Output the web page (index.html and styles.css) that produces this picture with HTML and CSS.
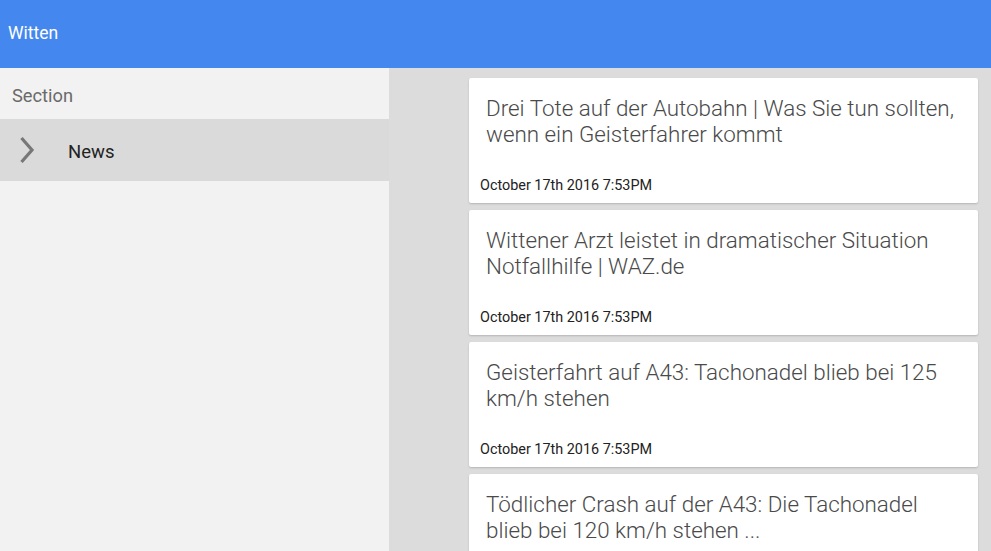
FILE: index.html
```html
<!DOCTYPE html>
<html>
<head>
<meta charset="utf-8">
<link rel="stylesheet" href="styles.css">
</head>
<body>
<header class="topbar"><span class="title">Witten</span></header>
<div class="main">
  <aside class="sidebar">
    <div class="section-label">Section</div>
    <div class="nav-item">
      <svg class="chev" width="16" height="28" viewBox="0 0 16 28"><path d="M2.5 2 L13 14 L2.5 26" fill="none" stroke="#777" stroke-width="3.2"/></svg>
      <span class="nav-text">News</span>
    </div>
  </aside>
  <section class="feed">
    <article class="card">
      <h2 class="card-title">Drei Tote auf der Autobahn | Was Sie tun sollten, wenn ein Geisterfahrer kommt</h2>
      <div class="card-date">October 17th 2016 7:53PM</div>
    </article>
    <article class="card">
      <h2 class="card-title">Wittener Arzt leistet in dramatischer Situation Notfallhilfe | WAZ.de</h2>
      <div class="card-date">October 17th 2016 7:53PM</div>
    </article>
    <article class="card">
      <h2 class="card-title">Geisterfahrt auf A43: Tachonadel blieb bei 125 km/h stehen</h2>
      <div class="card-date">October 17th 2016 7:53PM</div>
    </article>
    <article class="card">
      <h2 class="card-title">Tödlicher Crash auf der A43: Die Tachonadel blieb bei 120 km/h stehen ...</h2>
      <div class="card-date">October 17th 2016 7:53PM</div>
    </article>
  </section>
</div>
</body>
</html>
```
FILE: styles.css
```css
html, body {
  margin: 0;
  padding: 0;
  height: 100%;
  overflow: hidden;
}
body {
  font-family: Roboto, "Liberation Sans", sans-serif;
  background: #dcdcdc;
}
.topbar {
  height: 68px;
  background: #4487ee;
  display: flex;
  align-items: center;
  padding-left: 8px;
  box-sizing: border-box;
}
.title {
  color: #fff;
  font-size: 17.5px;
  margin-top: -2px;
}
.main {
  display: flex;
  height: calc(100% - 68px);
}
.sidebar {
  width: 389px;
  flex: none;
  background: #f2f2f2;
}
.section-label {
  height: 51px;
  display: flex;
  align-items: center;
  padding-left: 12px;
  padding-top: 3px;
  font-size: 18.3px;
  color: #6a6a6a;
  box-sizing: border-box;
}
.nav-item {
  height: 62px;
  background: #dadada;
  display: flex;
  align-items: center;
}
.chev {
  margin-left: 19px;
  flex: none;
}
.nav-text {
  margin-left: 33px;
  margin-top: 3px;
  font-size: 18.5px;
  color: #222;
}
.feed {
  flex: 1;
  padding: 10px 13px 0 80px;
  display: flex;
  flex-direction: column;
  gap: 7px;
}
.card {
  height: 125px;
  flex: none;
  background: #fff;
  border-radius: 2px;
  box-shadow: 0 1px 2px rgba(0,0,0,0.18);
  display: flex;
  flex-direction: column;
  box-sizing: border-box;
  padding: 17px 12px 9px 11px;
}
.card-title {
  margin: 0;
  padding-left: 6px;
  font-family: "Roboto Light", Roboto, sans-serif;
  font-weight: 300;
  font-size: 22.4px;
  line-height: 26px;
  color: #4a4a4a;
}
.card-date {
  margin-top: auto;
  font-size: 14.4px;
  color: #222;
}
```
